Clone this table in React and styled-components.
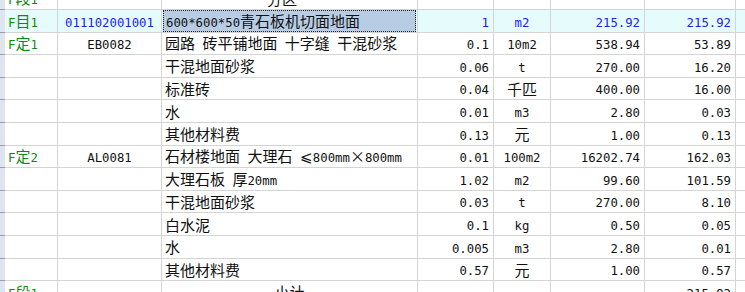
import React from "react";
import styled, { createGlobalStyle, css } from "styled-components";

const GlobalStyle = createGlobalStyle`
  html, body {
    margin: 0;
    padding: 0;
    background: #ffffff;
    overflow: hidden;
  }
`;

const colors = {
  line: "#d4d4d4",
  green: "#118a11",
  blue: "#1c1cf0",
  text: "#111111",
  cyan: "#e6fcfc",
  selected: "#b8cce4",
  strip: "#dfe5ee",
  tick: "#9aa0a8",
};

const Viewport = styled.div`
  width: 745px;
  height: 292px;
  overflow: hidden;
  font-family: "Noto Sans CJK SC", "Noto Sans", sans-serif;
  font-size: 15px;
  color: ${colors.text};
`;

const Sheet = styled.div`
  display: grid;
  grid-template-columns: 5px 53px 104px 256px 76px 57px 94px 91px 30px;
  grid-auto-rows: 22.6px;
  margin-top: -12.6px;
`;

const RowHead = styled.div`
  background: ${colors.strip};
  border-bottom: 1px solid ${colors.tick};
  box-sizing: border-box;
`;

const alignments = {
  left: css`
    justify-content: flex-start;
    padding-left: 3px;
  `,
  center: css`
    justify-content: center;
  `,
  right: css`
    justify-content: flex-end;
    padding-right: 4px;
  `,
};

const Cell = styled.div`
  display: flex;
  align-items: center;
  box-sizing: border-box;
  border-right: 1px solid ${colors.line};
  border-bottom: 1px solid ${colors.line};
  white-space: pre;
  overflow: hidden;
  background: ${({ $hl }) => ($hl ? colors.cyan : "#ffffff")};
  color: ${({ $tone }) =>
    $tone === "green" ? colors.green : $tone === "blue" ? colors.blue : colors.text};
  ${({ $align }) => alignments[$align || "left"]}
`;

const Selection = styled.div`
  flex: 1;
  align-self: stretch;
  display: flex;
  align-items: center;
  margin: 0 1px 0 -2px;
  padding-left: 2px;
  background: ${colors.selected};
  border: 1px dotted #202020;
`;

const Text = styled.span`
  line-height: 1;
  white-space: pre;
`;

const Latin = styled.span`
  font-family: "DejaVu Sans Mono", "Liberation Mono", monospace;
  font-size: 12.3px;
`;

const Mixed = ({ text }) => (
  <Text>
    {String(text)
      .split(/([\x00-\x7F]+)/)
      .filter(Boolean)
      .map((part, i) =>
        /^[\x00-\x7F]+$/.test(part) ? <Latin key={i}>{part}</Latin> : part
      )}
  </Text>
);

const rows = [
  { tag: "F段1", name: "分区一", nameAlign: "center" },
  {
    tag: "F目1",
    code: "011102001001",
    name: "600*600*50青石板机切面地面",
    qty: "1",
    unit: "m2",
    price: "215.92",
    total: "215.92",
    hl: true,
    selected: true,
  },
  { tag: "F定1", code: "EB0082", name: "园路 砖平铺地面 十字缝 干混砂浆", qty: "0.1", unit: "10m2", price: "538.94", total: "53.89" },
  { name: "干混地面砂浆", qty: "0.06", unit: "t", price: "270.00", total: "16.20" },
  { name: "标准砖", qty: "0.04", unit: "千匹", price: "400.00", total: "16.00" },
  { name: "水", qty: "0.01", unit: "m3", price: "2.80", total: "0.03" },
  { name: "其他材料费", qty: "0.13", unit: "元", price: "1.00", total: "0.13" },
  { tag: "F定2", code: "AL0081", name: "石材楼地面 大理石 ⩽800mm×800mm", qty: "0.01", unit: "100m2", price: "16202.74", total: "162.03" },
  { name: "大理石板 厚20mm", qty: "1.02", unit: "m2", price: "99.60", total: "101.59" },
  { name: "干混地面砂浆", qty: "0.03", unit: "t", price: "270.00", total: "8.10" },
  { name: "白水泥", qty: "0.1", unit: "kg", price: "0.50", total: "0.05" },
  { name: "水", qty: "0.005", unit: "m3", price: "2.80", total: "0.01" },
  { name: "其他材料费", qty: "0.57", unit: "元", price: "1.00", total: "0.57" },
  { tag: "F段1", name: "小计", nameAlign: "center", total: "215.92" },
];

const Row = ({ row }) => {
  const tone = row.hl ? "blue" : undefined;
  return (
    <>
      <RowHead />
      <Cell $hl={row.hl} $tone="green" $align="left">
        {row.tag && <Mixed text={row.tag} />}
      </Cell>
      <Cell $hl={row.hl} $tone={tone} $align="center">
        {row.code && <Mixed text={row.code} />}
      </Cell>
      <Cell $hl={row.hl} $align={row.nameAlign || "left"}>
        {row.selected ? (
          <Selection>
            <Mixed text={row.name} />
          </Selection>
        ) : (
          row.name && <Mixed text={row.name} />
        )}
      </Cell>
      <Cell $hl={row.hl} $tone={tone} $align="right">
        {row.qty && <Mixed text={row.qty} />}
      </Cell>
      <Cell $hl={row.hl} $tone={tone} $align="center">
        {row.unit && <Mixed text={row.unit} />}
      </Cell>
      <Cell $hl={row.hl} $tone={tone} $align="right">
        {row.price && <Mixed text={row.price} />}
      </Cell>
      <Cell $hl={row.hl} $tone={tone} $align="right">
        {row.total && <Mixed text={row.total} />}
      </Cell>
      <Cell $hl={row.hl} />
    </>
  );
};

const App = () => (
  <>
    <GlobalStyle />
    <Viewport>
      <Sheet>
        {rows.map((row, index) => (
          <Row row={row} key={index} />
        ))}
      </Sheet>
    </Viewport>
  </>
);

export default App;
